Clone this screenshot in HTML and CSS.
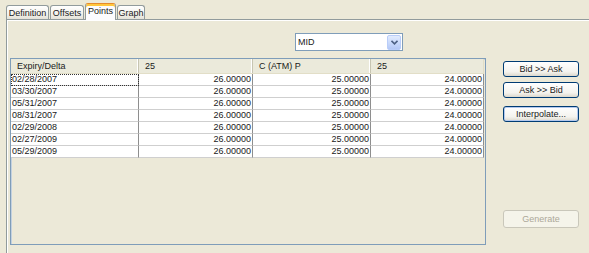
FILE: index.html
```html
<!DOCTYPE html>
<html>
<head>
  <meta charset="utf-8">
  <meta name="viewport" content="width=device-width, initial-scale=1.0">
  <title>Points</title>
  <link rel="stylesheet" href="styles.css">
</head>
<body>
  <div class="tabs">
    <div class="tab tab-def">Definition</div>
    <div class="tab tab-off">Offsets</div>
    <div class="tab tab-pts selected">Points</div>
    <div class="tab tab-graph">Graph</div>
  </div>
  <div class="pane">
    <div class="combo-row">
      <div class="combo">
        <span class="combo-text">MID</span>
        <span class="combo-btn">
          <svg width="7" height="5" viewBox="0 0 7 5"><path d="M0.5 0.8 L3.5 3.8 L6.5 0.8" fill="none" stroke="#4D6185" stroke-width="1.6"/></svg>
        </span>
      </div>
    </div>
    <div class="main">
      <div class="grid-box">
        <div class="grid">
          <div class="hd">Expiry/Delta</div>
          <div class="hd">25</div>
          <div class="hd">C (ATM) P</div>
          <div class="hd">25</div>

          <div class="cell date focus">02/28/2007</div>
          <div class="cell num">26.00000</div>
          <div class="cell num">25.00000</div>
          <div class="cell num">24.00000</div>

          <div class="cell date">03/30/2007</div>
          <div class="cell num">26.00000</div>
          <div class="cell num">25.00000</div>
          <div class="cell num">24.00000</div>

          <div class="cell date">05/31/2007</div>
          <div class="cell num">26.00000</div>
          <div class="cell num">25.00000</div>
          <div class="cell num">24.00000</div>

          <div class="cell date">08/31/2007</div>
          <div class="cell num">26.00000</div>
          <div class="cell num">25.00000</div>
          <div class="cell num">24.00000</div>

          <div class="cell date">02/29/2008</div>
          <div class="cell num">26.00000</div>
          <div class="cell num">25.00000</div>
          <div class="cell num">24.00000</div>

          <div class="cell date">02/27/2009</div>
          <div class="cell num">26.00000</div>
          <div class="cell num">25.00000</div>
          <div class="cell num">24.00000</div>

          <div class="cell date">05/29/2009</div>
          <div class="cell num">26.00000</div>
          <div class="cell num">25.00000</div>
          <div class="cell num">24.00000</div>
        </div>
      </div>
      <div class="side">
        <button class="btn">Bid &gt;&gt; Ask</button>
        <button class="btn">Ask &gt;&gt; Bid</button>
        <button class="btn interp">Interpolate...</button>
        <button class="btn generate" disabled>Generate</button>
      </div>
    </div>
  </div>
</body>
</html>
```

FILE: styles.css
```css
body {
  margin: 0;
  width: 589px;
  height: 253px;
  overflow: hidden;
  background-color: #ECE9D8;
  color: #1A1A1A;
  font-family: "Liberation Sans", Arial, sans-serif;
  font-size: 9px;
}

/* tab strip */
.tabs {
  display: flex;
  align-items: flex-end;
  height: 19px;
  padding-left: 6px;
}

.tab {
  box-sizing: border-box;
  height: 14px;
  margin-right: 1px;
  border: 1px solid #919B9C;
  border-bottom: none;
  border-radius: 3px 3px 0 0;
  background: linear-gradient(#FFFFFF, #F3F2EC 60%, #E4E2D8);
  text-align: center;
  line-height: 14px;
}

.tab-def { width: 43px; }
.tab-off { width: 34px; }
.tab-pts { width: 31px; }
.tab-graph { width: 28px; }

.tab.selected {
  position: relative;
  z-index: 1;
  height: 17px;
  margin-bottom: -1px;
  border-top: 1px solid #E68B2C;
  background: #FCFCFE;
  box-shadow: inset 0 2px 0 #FFC73C;
  line-height: 15px;
}

/* tab content */
.pane {
  box-sizing: border-box;
  height: 234px;
  margin-left: 6px;
  border-left: 1px solid #919B9C;
  border-top: 1px solid #919B9C;
  box-shadow: inset 1px 1px 0 #FFFFFF;
  padding: 13px 0 0 3px;
}

.combo-row {
  display: flex;
  padding-left: 285px;
}

.combo {
  box-sizing: border-box;
  display: flex;
  align-items: center;
  width: 108px;
  height: 18px;
  border: 1px solid #7F9DB9;
  background: #FFFFFF;
  padding: 1px;
}

.combo-text {
  flex: 1;
  padding-left: 1px;
}

.combo-btn {
  box-sizing: border-box;
  display: flex;
  align-items: center;
  justify-content: center;
  width: 14px;
  height: 15px;
  border: 1px solid #B9CDF9;
  border-radius: 2px;
  background: linear-gradient(#E2ECFE, #C6D7FB 60%, #B4C8F6);
}

.main {
  display: flex;
  gap: 17px;
  margin-top: 7px;
}

/* table */
.grid-box {
  box-sizing: border-box;
  width: 476px;
  height: 187px;
  border: 1px solid #7F9DB9;
  box-shadow: inset 1px 1px 0 #C3D1DF;
}

.grid {
  display: grid;
  grid-template-columns: 128px 114px 118px 113px;
}

.hd {
  box-sizing: border-box;
  height: 15px;
  padding-left: 6px;
  line-height: 14px;
  background: #EBEADB;
  border-bottom: 1px solid #E2DEC7;
  box-shadow: inset -1px 0 0 #C7C5B2, inset -2px 0 0 #FFFFFF;
}

.hd:nth-child(4) { box-shadow: inset -1px 0 0 #E2DEC7; }

.cell {
  box-sizing: border-box;
  height: 12px;
  line-height: 11px;
  background: #FFFFFF;
  border-right: 1px solid #8E8E8E;
  border-bottom: 1px solid #CFCFCF;
  white-space: nowrap;
}

.cell.date { padding-left: 1px; }

.cell.num {
  text-align: right;
  padding-right: 1px;
}

.cell.focus {
  outline: 1px dotted #333333;
  outline-offset: -1px;
}

/* buttons */
.side {
  display: flex;
  flex-direction: column;
  width: 76px;
  height: 187px;
  padding-top: 3px;
  box-sizing: border-box;
}

.btn {
  box-sizing: border-box;
  height: 16px;
  margin: 0 0 5px 0;
  padding: 0;
  border: 1px solid #003C74;
  border-radius: 3px;
  background: linear-gradient(#FFFFFF, #F4F3EE 70%, #DCD8CC);
  color: #1A1A1A;
  font: inherit;
}

.btn.interp {
  margin-top: 3px;
  box-shadow: inset 0 0 0 1px #B4C9EE;
}

.btn.generate {
  height: 18px;
  margin: auto 0 17px 0;
  border-color: #C9C7BA;
  background: #F5F4EA;
  color: #ACA899;
}
```
